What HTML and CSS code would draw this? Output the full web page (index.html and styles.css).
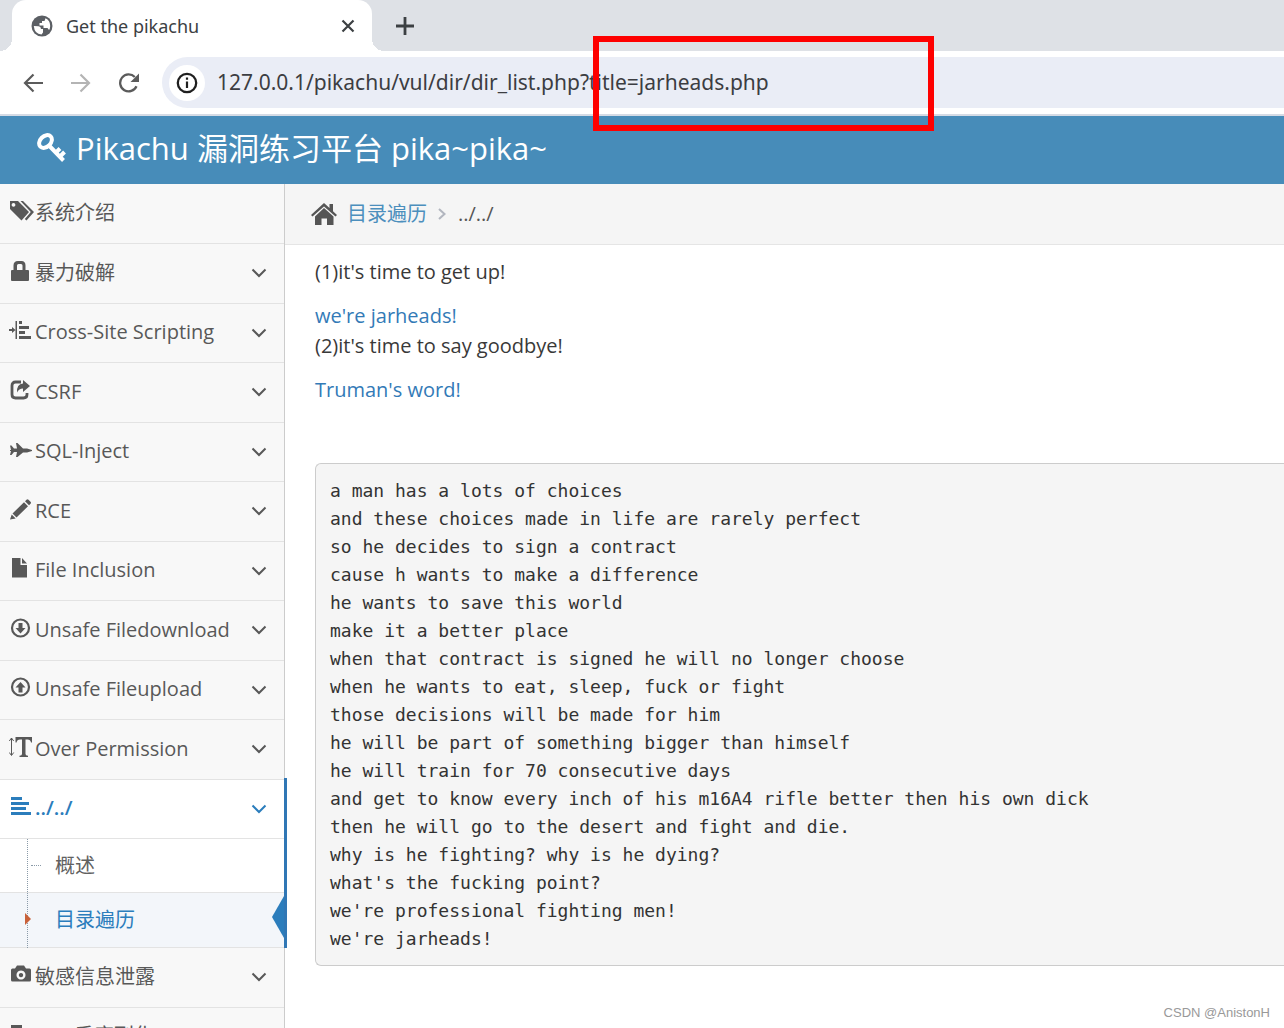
FILE: index.html
```
<!DOCTYPE html>
<html lang="zh-CN">
<head>
<meta charset="utf-8">
<title>Get the pikachu</title>
<link rel="stylesheet" href="styles.css">
</head>
<body>
<svg class="defs" aria-hidden="true">
  <symbol id="chevron" viewBox="0 0 16 10"><path d="M1.500 1.500 8 8l6.500-6.500" fill="none" stroke="currentColor" stroke-width="2"/></symbol>
</svg>

<div class="browser">
  <div class="tabs">
    <div class="tab">
      <svg class="globe" viewBox="0 0 22 22"><circle cx="11" cy="11" r="10.500" fill="#5b5f64"/><path d="M2.800 11l4.700.3q2.500.2 2.500 2.700h2v3.500l-1.500 2Q3.500 19 2.800 11zM14.500 3.200q4.700 2 4.700 7.800-.2 3-1.200 4l-1.500-2h-4V10.500H8.500V8H11V6h2.500z" fill="#fff"/></svg>
      <span class="tab-title">Get the pikachu</span>
      <button class="icon-btn" aria-label="Close tab"><svg width="14" height="14" viewBox="0 0 14 14"><path d="M1.500 1.500l11 11M12.500 1.500l-11 11" stroke="#3c4043" stroke-width="2.200"/></svg></button>
    </div>
    <button class="icon-btn new-tab" aria-label="New tab"><svg width="18" height="18" viewBox="0 0 18 18"><path d="M9 0v18M0 9h18" stroke="#3c4043" stroke-width="2.800"/></svg></button>
  </div>
  <div class="toolbar">
    <button class="icon-btn" aria-label="Back"><svg width="20" height="20" viewBox="0 0 20 20"><path d="M20 10H2M10.500 1.500 2 10l8.500 8.500" fill="none" stroke="#5b5b5b" stroke-width="2.200"/></svg></button>
    <button class="icon-btn" aria-label="Forward"><svg width="20" height="20" viewBox="0 0 20 20"><path d="M0 10h18M9.500 1.500 18 10l-8.500 8.500" fill="none" stroke="#b4b4b4" stroke-width="2.200"/></svg></button>
    <button class="icon-btn" aria-label="Reload"><svg width="20" height="20" viewBox="0 0 20 20"><path d="M17.500 13.200A8.500 8.500 0 1 1 15.800 4" fill="none" stroke="#5b5b5b" stroke-width="2.300"/><path d="M20 .5V9h-8.500z" fill="#5b5b5b"/></svg></button>
    <div class="address">
      <button class="icon-btn info" aria-label="Site information"><svg width="22" height="22" viewBox="0 0 22 22"><circle cx="11" cy="11" r="9.200" fill="none" stroke="#1f1f1f" stroke-width="2.300"/><path d="M11 9.500V16M11 5.500v2.300" stroke="#1f1f1f" stroke-width="2.200"/></svg></button>
      <input class="url" type="text" aria-label="Address" value="127.0.0.1/pikachu/vul/dir/dir_list.php?title=jarheads.php">
    </div>
  </div>
  <div class="highlight"></div>
</div>

<header class="navbar">
  <a class="brand" href="#">
    <svg width="30" height="30" viewBox="0 0 30 30"><ellipse cx="8.500" cy="8.500" rx="7.300" ry="5.300" transform="rotate(-45 8.500 8.500)" fill="none" stroke="#fff" stroke-width="4"/><path d="M12 12.500 26.500 27.500M18.500 20l4.500-4.500M22.500 24l5-5" fill="none" stroke="#fff" stroke-width="4"/></svg>
    <span>Pikachu 漏洞练习平台 pika~pika~</span>
  </a>
</header>

<div class="page">
  <nav class="sidebar">
    <ul class="menu">
      <li><a class="row" href="#"><svg class="ico" viewBox="0 0 26 24"><path d="M1 0h8l11 11-7.500 8.500L1 8zM4.500 2a1.900 1.900 0 1 0 .01 0z" fill-rule="evenodd"/><path d="M11.500 0h2.500l11 11-7.500 8.500-1.700-1.500 6-7z"/></svg><span>系统介绍</span></a></li>
      <li><a class="row" href="#"><svg class="ico" viewBox="0 0 26 24"><path d="M2 10q0-1 1-1h1.500V4.500Q4.500 0 9 0h3.500Q16.500 0 16.500 4.500V9H19q1 0 1 1v9q0 1-1 1H3q-1 0-1-1zm6-1h5.500V4.500q0-1.500-1.500-1.500H9.500Q8 3 8 4.500z" fill-rule="evenodd"/></svg><span>暴力破解</span><svg class="chev"><use href="#chevron"/></svg></a></li>
      <li><a class="row" href="#"><svg class="ico" viewBox="0 0 26 24"><path d="M0 9h3V7l3.500 3L3 13v-2H0zM6.500 1h1.500v18H6.500zM10 1h3v3h-3zM10 6h10v3H10zM10 11h6v3h-6zM10 16h12v3H10z"/></svg><span>Cross-Site Scripting</span><svg class="chev"><use href="#chevron"/></svg></a></li>
      <li><a class="row" href="#"><svg class="ico" viewBox="0 0 26 24"><path d="M12 2H6.500Q3 2 3 5.500v9Q3 18 6.500 18h8q3.500 0 3.500-3.500V13" fill="none" stroke="currentColor" stroke-width="2.800"/><path d="M14 0l7 6-7 6V8.500q-4 0-6 4Q7.500 4 14 3.500z"/></svg><span>CSRF</span><svg class="chev"><use href="#chevron"/></svg></a></li>
      <li><a class="row" href="#"><svg class="ico" viewBox="0 0 26 24"><path d="M1 6.500h1.500L5 9.500h3L7 4h1.500l5.500 5.500h4l5 1.500v1l-5 1.500h-4L8.500 18H7l1-5H5l-2.500 3H1l1-4H1v-1h1z"/></svg><span>SQL-Inject</span><svg class="chev"><use href="#chevron"/></svg></a></li>
      <li><a class="row" href="#"><svg class="ico" viewBox="0 0 26 24"><path d="M17.500.8q1-1 2 0l2 2q1 1 0 2L20 6.300 16 2.300zM15 3.300l4 4L7.500 18.500 3.500 14.500zM2.700 15.500l4 4L1 20.500z"/></svg><span>RCE</span><svg class="chev"><use href="#chevron"/></svg></a></li>
      <li><a class="row" href="#"><svg class="ico" viewBox="0 0 26 24"><path d="M3 0h8.500v7H18v12.500H3zM13 0l5 5.500h-5z"/></svg><span>File Inclusion</span><svg class="chev"><use href="#chevron"/></svg></a></li>
      <li><a class="row" href="#"><svg class="ico" viewBox="0 0 26 24"><circle cx="11.500" cy="10" r="8.500" fill="none" stroke="currentColor" stroke-width="2.200"/><path d="M9.500 5h4v5h3l-5 5.500-5-5.500h3z"/></svg><span>Unsafe Filedownload</span><svg class="chev"><use href="#chevron"/></svg></a></li>
      <li><a class="row" href="#"><svg class="ico" viewBox="0 0 26 24"><circle cx="11.500" cy="10" r="8.500" fill="none" stroke="currentColor" stroke-width="2.200"/><path d="M9.500 15.500h4v-5h3l-5-5.500-5 5.500h3z"/></svg><span>Unsafe Fileupload</span><svg class="chev"><use href="#chevron"/></svg></a></li>
      <li><a class="row" href="#"><svg class="ico" viewBox="0 0 26 24"><path d="M2.500 1v17M.3 4 2.500 1l2.200 3M.3 15.500l2.200 3 2.200-3" fill="none" stroke="currentColor"/><path d="M6.500 0H23v5.500h-1q-.5-3-3.500-3h-2V17q0 1.500 2.500 1.700V20h-8.500v-1.300q2.500-.2 2.500-1.700V2.500h-2q-3 0-3.500 3H6.500z"/></svg><span>Over Permission</span><svg class="chev"><use href="#chevron"/></svg></a></li>
      <li class="open"><a class="row" href="#"><svg class="ico" viewBox="0 0 26 24"><path d="M2 1h11v3H2zM2 6h18v3H2zM2 11h15v3H2zM2 16h20v3H2z"/></svg><span>../../</span><svg class="chev"><use href="#chevron"/></svg></a>
        <ul class="submenu">
          <li><a class="subrow" href="#">概述</a></li>
          <li class="current"><a class="subrow" href="#">目录遍历</a></li>
        </ul>
      </li>
      <li><a class="row" href="#"><svg class="ico" viewBox="0 0 26 24"><path d="M2 5q0-1.500 1.500-1.500H6L8 .5h7l2 3h3.500Q22 3.500 22 5v10q0 1.500-1.500 1.500h-17Q2 16.500 2 15zm10 .5a4.500 4.500 0 1 0 .01 0zm0 2.400a2.200 2.200 0 1 1-.01 0z" fill-rule="evenodd"/></svg><span>敏感信息泄露</span><svg class="chev"><use href="#chevron"/></svg></a></li>
      <li><a class="row" href="#"><svg class="ico" viewBox="0 0 26 24"><path d="M2 1h11v3H2zM2 6h18v3H2zM2 11h15v3H2zM2 16h20v3H2z"/></svg><span>PHP反序列化</span><svg class="chev"><use href="#chevron"/></svg></a></li>
    </ul>
  </nav>

  <main class="content">
    <div class="crumbs">
      <svg width="26" height="22" viewBox="0 0 26 22"><path d="M13 0l5.500 5V1H22v7.200l4 3.800-1.500 1.500L13 3.500 1.500 13.500 0 12z"/><path d="M13 5l9.500 8.500V22H16v-6.500h-5.500V22H4v-8.500z"/></svg>
      <a href="#">目录遍历</a>
      <svg class="sep" width="8" height="12" viewBox="0 0 8 12"><path d="M1 1l5.500 5L1 11" fill="none" stroke="#b2b6bf" stroke-width="2"/></svg>
      <span>../../</span>
    </div>
    <div class="body">
      <p>(1)it's time to get up!</p>
      <a href="#">we're jarheads!</a>
      <p>(2)it's time to say goodbye!</p>
      <a href="#">Truman's word!</a>
      <pre class="listing">a man has a lots of choices
and these choices made in life are rarely perfect
so he decides to sign a contract
cause h wants to make a difference
he wants to save this world
make it a better place
when that contract is signed he will no longer choose
when he wants to eat, sleep, fuck or fight
those decisions will be made for him
he will be part of something bigger than himself
he will train for 70 consecutive days
and get to know every inch of his m16A4 rifle better then his own dick
then he will go to the desert and fight and die.
why is he fighting? why is he dying?
what's the fucking point?
we're professional fighting men!
we're jarheads!</pre>
    </div>
    <div class="watermark">CSDN @AnistonH</div>
  </main>
</div>
</body>
</html>
```
FILE: styles.css
```
* { box-sizing: border-box; }

body {
  margin: 0;
  height: 100vh;
  overflow: hidden;
  display: flex;
  flex-direction: column;
  background: #fff;
  color: #393939;
  font: 20px/30px "Open Sans", "Noto Sans CJK SC", sans-serif;
}

a { color: #4c8fbd; text-decoration: none; }
ul { list-style: none; margin: 0; padding: 0; }
svg { flex: none; fill: currentColor; }
.defs { position: absolute; width: 0; height: 0; }

/* Browser frame */
.browser { position: relative; flex: none; border-bottom: 2px solid #d5dbe5; }
.tabs { display: flex; align-items: center; height: 51px; padding-left: 12px; background: #dee1e6; }
.tab {
  position: relative;
  display: flex;
  align-items: center;
  width: 360px;
  height: 51px;
  padding: 0 17px 0 19px;
  border-radius: 14px 14px 0 0;
  background: #fff;
}
.tab::before, .tab::after { content: ""; position: absolute; bottom: 0; width: 12px; height: 12px; }
.tab::before { left: -12px; background: radial-gradient(circle at 0 0, #dee1e6 12px, #fff 12px); }
.tab::after { right: -12px; background: radial-gradient(circle at 100% 0, #dee1e6 12px, #fff 12px); }
.globe { width: 22px; height: 22px; }
.tab-title { flex: 1; padding-left: 13px; color: #3c4043; font: 18px/24px "Noto Sans", sans-serif; }
.icon-btn {
  display: flex;
  align-items: center;
  justify-content: center;
  padding: 0;
  border: 0;
  background: none;
}
.icon-btn svg { fill: none; }
.new-tab { margin-left: 24px; }
.toolbar { display: flex; align-items: center; gap: 28px; height: 63px; padding-left: 23px; background: #fff; }
.address {
  display: flex;
  align-items: center;
  flex: 1;
  height: 51px;
  margin-left: -5px;
  padding-left: 7px;
  border-radius: 26px 0 0 26px;
  background: #eaedf6;
}
.info { width: 36px; height: 36px; border-radius: 50%; background: #fff; }
.url {
  flex: 1;
  min-width: 0;
  margin-left: 12px;
  padding: 0 0 2px;
  border: 0;
  outline: 0;
  background: none;
  color: #3c3d42;
  font: 21px/30px "Noto Sans", sans-serif;
}
.highlight {
  position: absolute;
  left: 593px;
  top: 36px;
  width: 341px;
  height: 95px;
  border: 6px solid #fe0000;
}

/* Site header */
.navbar { flex: none; height: 68px; padding: 0 37px; background: #478cb9; }
.brand { display: flex; align-items: center; gap: 9px; height: 63px; color: #fff; font-size: 31px; line-height: 42px; }

.page { display: flex; flex: 1; min-height: 0; }

/* Sidebar */
.sidebar { flex: none; width: 285px; padding-top: 1px; border-right: 1px solid #ccc; background: #f8f8f8; }
.row {
  display: flex;
  align-items: center;
  height: 59px;
  padding: 0 17px 2px 9px;
  border-bottom: 1px solid #e3e3e3;
  color: #585858;
}
.menu > li:nth-child(even) > .row { height: 60px; }
.row span { flex: 1; white-space: nowrap; }
.ico { width: 26px; height: 24px; }
.chev { width: 16px; height: 10px; margin-top: 1px; }
.open { position: relative; background: #fff; }
.open > .row { color: #2b7dbc; font-weight: 600; }
.open::after { content: ""; position: absolute; top: -2px; bottom: 0; right: -3px; width: 3px; background: #3077b5; }
.submenu { position: relative; }
.submenu::before { content: ""; position: absolute; z-index: 1; left: 27px; top: 0; bottom: 0; border-left: 1px dotted #8a9aa8; }
.subrow {
  position: relative;
  display: flex;
  align-items: center;
  height: 54px;
  padding-left: 55px;
  border-bottom: 1px solid #e3e3e3;
  color: #616161;
}
.subrow::before { content: ""; position: absolute; left: 31px; top: 26px; width: 10px; border-top: 1px dotted #8a9aa8; }
.current .subrow { height: 55px; color: #2b7dbc; background: #f3f6fa; }
.current .subrow::before {
  z-index: 2;
  left: 25px;
  top: 20px;
  border: solid transparent;
  border-width: 6px 0 6px 6px;
  border-left-color: #c86139;
  width: 0;
}
.current .subrow::after {
  content: "";
  position: absolute;
  right: 0;
  top: 3px;
  border: solid transparent;
  border-width: 21px 12px 21px 0;
  border-right-color: #2b7dbc;
}

/* Main column */
.content { position: relative; flex: 1; min-width: 0; }
.crumbs {
  display: flex;
  align-items: center;
  height: 61px;
  padding-left: 26px;
  border-bottom: 1px solid #e5e5e5;
  background: #f5f5f5;
  color: #555;
}
.crumbs a { padding-left: 10px; }
.sep { margin: 0 12px 0 11px; }
.body { padding: 12px 0 0 30px; }
.body p { margin: 0 0 14px; }
.body > a { display: block; color: #337ab7; }
.listing {
  margin: 58px 0 0;
  padding: 13px 14px 12px;
  border: 1px solid #ccc;
  border-right: 0;
  border-radius: 6px 0 0 6px;
  background: #f5f5f5;
  color: #333;
  font: 18px/28px "DejaVu Sans Mono", monospace;
}
.watermark {
  position: absolute;
  right: 14px;
  bottom: 6px;
  color: #999;
  font: 13px/18px "Liberation Sans", sans-serif;
}
```
